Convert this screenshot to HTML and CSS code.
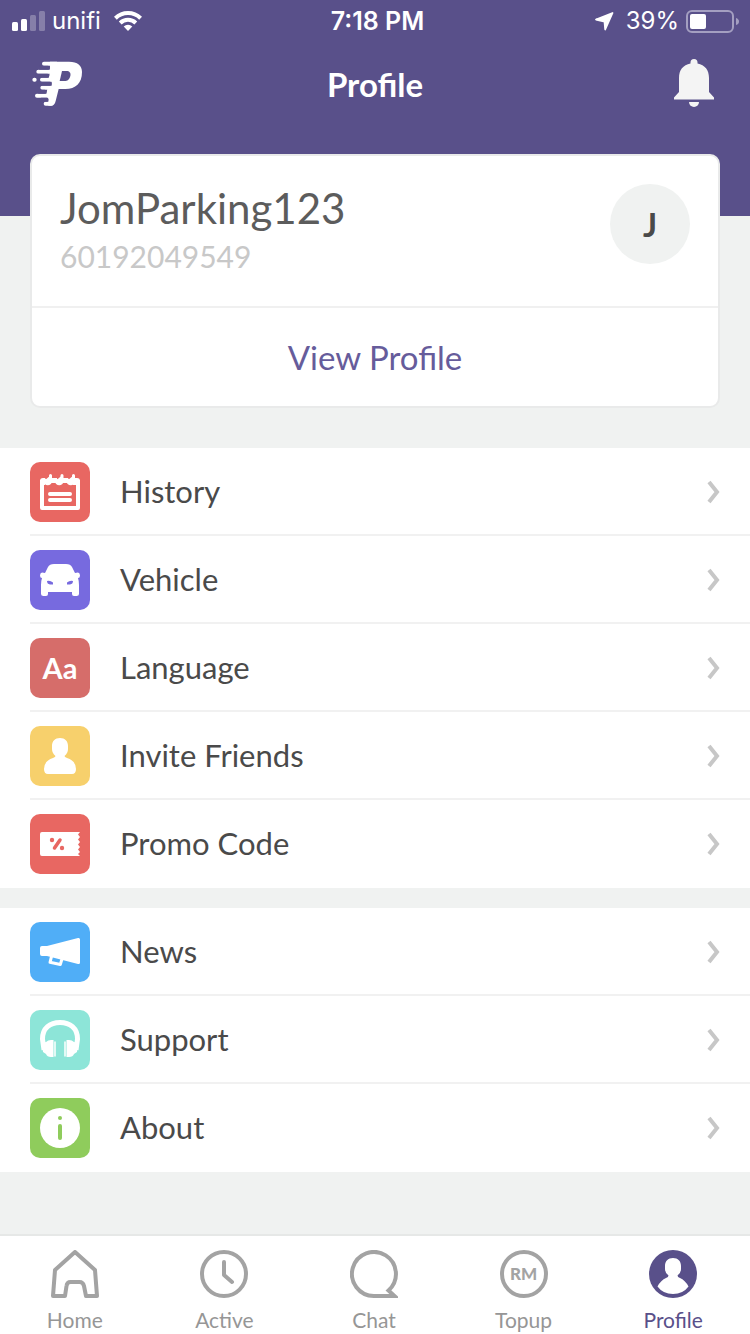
FILE: index.html
```html
<!DOCTYPE html>
<html lang="en">
<head>
<meta charset="utf-8">
<meta name="viewport" content="width=device-width, initial-scale=1">
<title>Profile</title>
<link rel="stylesheet" href="styles.css">
</head>
<body>
<header class="header">
  <div class="status">
    <div class="status-side">
      <svg width="33" height="20" viewBox="0 0 33 20" fill="#fff" aria-hidden="true"><rect y="11" width="6" height="9" rx="1.5"/><rect x="9" y="8" width="6" height="12" rx="1.5"/><g opacity=".27"><rect x="18" y="4" width="6" height="16" rx="1.5"/><rect x="27" width="6" height="20" rx="1.5"/></g></svg>
      <span class="carrier">unifi</span>
      <svg class="wifi" width="28" height="20" viewBox="0 0 28 20" aria-hidden="true"><g fill="none" stroke="#fff" stroke-width="4"><path d="M1.4 7.2a18 18 0 0 1 25.2 0"/><path d="M6.2 12a11.2 11.2 0 0 1 15.6 0"/></g><path d="M14 20l-4.3-4.4a6 6 0 0 1 8.6 0z" fill="#fff"/></svg>
    </div>
    <time class="clock">7:18 PM</time>
    <div class="status-side status-right">
      <svg class="locate" width="19" height="19" viewBox="0 0 19 19" aria-hidden="true"><path d="M17.500 1L1 7.500L9.500 9.500L10.200 17.500z" fill="#fff" stroke="#fff" stroke-width="1.800" stroke-linejoin="round"/></svg>
      <span>39%</span>
      <svg width="53" height="23" viewBox="0 0 53 23" aria-hidden="true"><rect x="1" y="1" width="46" height="21" rx="5" fill="none" stroke="#a49fc1" stroke-width="2"/><rect x="4" y="4" width="16" height="15" rx="2" fill="#fff"/><path d="M50 8q3 1 3 3.500T50 15z" fill="#a49fc1"/></svg>
    </div>
  </div>
  <div class="nav">
    <svg class="logo" width="54" height="48" viewBox="90 175 162 144" role="img" aria-label="JomParking"><path d="M150 183H207C233 183 246 195 246 214C246 248 227 265 196 265H176L167 301Q164 315 153 315H145V303L143 290L139 278L142 266L155 255V243L146 231L149 219V207L150 195Z" fill="#fff"/><path d="M186 211H199C209 211 213 217 211 226C208 237 203 241 193 241H179Z" fill="#59508a"/><g stroke="#fff" stroke-width="12" stroke-linecap="round"><path d="M132 189H170M115 213H160M126 237H160M103 237h1M127 261H160M111 285H160M137 309H155"/></g><g stroke="#59508a" stroke-width="12" stroke-linecap="round"><path d="M120 201H144M112 225H142M118 249H149M117 273H134M124 297H140"/></g></svg>
    <h1 class="title">Profile</h1>
    <button class="bell" type="button" aria-label="Notifications"><svg width="40" height="48" viewBox="0 0 40 48" fill="#f4f4f4"><path d="M0 40.500V38.500L5 33V19C5 11 9 6 16.500 4.500V3.500a3.500 3.500 0 0 1 7 0v1C31 6 35 11 35 19V33L40 38.500V40.500z"/><path d="M15 43h10a5 5 0 0 1-10 0z"/></svg></button>
  </div>
</header>
<main class="main">
  <section class="card">
    <div class="person">
      <div class="identity">
        <h2 class="name">JomParking123</h2>
        <p class="phone">60192049549</p>
      </div>
      <div class="avatar">J</div>
    </div>
    <a class="view" href="#profile">View Profile</a>
  </section>

  <nav class="list" aria-label="Account">
    <a class="row" href="#history">
      <svg class="tile red" viewBox="0 0 60 60"><path d="M12 18V46H48V18" fill="none" stroke="#fff" stroke-width="4" stroke-linejoin="round"/><path d="M10 23V19Q10 16 13 16H15V23zM20 16H27V21H20zM31 16H38V21H31zM43 16H47Q50 16 50 19V23H43z" fill="#fff"/><path d="M15 18V19.500a2.800 2.800 0 0 0 5.500 0V13.500M26.500 18V19.500a2.800 2.800 0 0 0 5.500 0V13.500M38 18V19.500a2.800 2.800 0 0 0 5.500 0V13.500" fill="#fff" stroke="#fff" stroke-width="3" stroke-linecap="round"/><path d="M20 32H40M20 38H40" stroke="#fff" stroke-width="4" stroke-linecap="round"/></svg>
      <span class="label">History</span>
      <svg class="chevron" viewBox="0 0 14 24"><path d="M3 2l8 10-8 10"/></svg>
    </a>
    <a class="row" href="#vehicle">
      <svg class="tile violet" viewBox="0 0 60 60"><path d="M15 23L18 17Q19.500 14 24 14H36Q40.500 14 42 17L45 23L48 22.500Q50 23 50 25.500Q50 28 48 28Q49 31 49 35V44Q49 46 46.500 46H44Q42 46 42 44V42H18V44Q18 46 16 46H13.500Q11 46 11 44V35Q11 31 12 28Q10 28 10 25.500Q10 23 12 22.500z" fill="#fff"/><path d="M17 31Q20 30 23 32.500V34.500H20Q17 34 17 31zM43 31Q40 30 37 32.500V34.500H40Q43 34 43 31z" fill="#776adf"/></svg>
      <span class="label">Vehicle</span>
      <svg class="chevron" viewBox="0 0 14 24"><path d="M3 2l8 10-8 10"/></svg>
    </a>
    <a class="row" href="#language">
      <span class="tile rose">Aa</span>
      <span class="label">Language</span>
      <svg class="chevron" viewBox="0 0 14 24"><path d="M3 2l8 10-8 10"/></svg>
    </a>
    <a class="row" href="#invite">
      <svg class="tile yellow" viewBox="0 0 60 60"><path d="M30 12C35 12 38 15 38 20V23Q38 27 34.500 30Q34.500 31 37 32Q46 35 46 43Q46 48 42 48H18Q14 48 14 43Q14 35 23 32Q25.500 31 25.500 30Q22 27 22 23V20C22 15 25 12 30 12z" fill="#fff"/></svg>
      <span class="label">Invite Friends</span>
      <svg class="chevron" viewBox="0 0 14 24"><path d="M3 2l8 10-8 10"/></svg>
    </a>
    <a class="row" href="#promo">
      <svg class="tile red" viewBox="0 0 60 60"><path d="M12 18H50L48 20.500L50 23L48 25.500L50 28L48 30.500L50 33L48 35.500L50 38L48 40L50 42H12Q10 42 10 40V20Q10 18 12 18z" fill="#fff"/><path d="M24.500 34L30 26" stroke="#e86762" stroke-width="3.500" stroke-linecap="round"/><circle cx="22" cy="26" r="2.200" fill="#e86762"/><circle cx="32" cy="34" r="2.200" fill="#e86762"/></svg>
      <span class="label">Promo Code</span>
      <svg class="chevron" viewBox="0 0 14 24"><path d="M3 2l8 10-8 10"/></svg>
    </a>
  </nav>

  <nav class="list" aria-label="Information">
    <a class="row" href="#news">
      <svg class="tile blue" viewBox="0 0 60 60"><path d="M12 24H17L48 16Q50 15.500 50 17.500V40.500Q50 42.500 48 42L17 34H12Q10 34 10 32V26Q10 24 12 24z" fill="#fff"/><path d="M21.500 34.500L20 40.300L30.300 42.500L32 37" fill="none" stroke="#fff" stroke-width="3" stroke-linejoin="round"/></svg>
      <span class="label">News</span>
      <svg class="chevron" viewBox="0 0 14 24"><path d="M3 2l8 10-8 10"/></svg>
    </a>
    <a class="row" href="#support">
      <svg class="tile mint" viewBox="0 0 60 60"><path d="M14 40L12.500 29C12.500 18 20 12.500 30 12.500S47.500 18 47.500 29L46 40" fill="none" stroke="#fff" stroke-width="5"/><path d="M12 33L16 32Q18 30 21 30H23.500V47H21Q17 47 16 44L13 42zM48 33L44 32Q42 30 39 30H36.500V47H39Q43 47 44 44L47 42z" fill="#fff"/><path d="M25 32V46M35 32V46" stroke="#fff" stroke-width="1.500" stroke-linecap="round"/></svg>
      <span class="label">Support</span>
      <svg class="chevron" viewBox="0 0 14 24"><path d="M3 2l8 10-8 10"/></svg>
    </a>
    <a class="row" href="#about">
      <svg class="tile green" viewBox="0 0 60 60"><circle cx="30" cy="30" r="20" fill="#fff"/><circle cx="30" cy="20" r="2" fill="#8fcc5c"/><path d="M30 28V40" stroke="#8fcc5c" stroke-width="4" stroke-linecap="round"/></svg>
      <span class="label">About</span>
      <svg class="chevron" viewBox="0 0 14 24"><path d="M3 2l8 10-8 10"/></svg>
    </a>
  </nav>
</main>

<nav class="tabs" aria-label="Main">
  <a class="tab" href="#home"><svg class="tab-icon" viewBox="0 0 48 48"><path d="M24 2L44 20L46 46H35L33 36Q32 32 28.500 32H19.500Q16 32 15.500 36L14 46H2L4 20z"/></svg>Home</a>
  <a class="tab" href="#active"><svg class="tab-icon" viewBox="0 0 48 48"><circle cx="24" cy="24" r="22"/><path d="M24 12V25L32 32" stroke-linecap="round"/></svg>Active</a>
  <a class="tab" href="#chat"><svg class="tab-icon sharp" viewBox="0 0 48 48"><path d="M24 46H44.500L38.500 40.500A22 22 0 1 0 24 46z"/></svg>Chat</a>
  <a class="tab" href="#topup"><span class="coin">RM</span>Topup</a>
  <a class="tab current" href="#profile" aria-current="page"><svg class="tab-icon solid" viewBox="0 0 48 48"><circle cx="24" cy="24" r="24" fill="#59508a"/><path d="M24 8C29 8 32 11 32 16V19Q32 23 28.500 25.500Q28.500 27 31 28Q36 30 39.500 36.500Q34 44 24 44T8.500 36.500Q12 30 17 28Q19.500 27 19.500 25.500Q16 23 16 19V16C16 11 19 8 24 8z" fill="#fff"/></svg>Profile</a>
</nav>
</body>
</html>
```
FILE: styles.css
```css
* {
  box-sizing: border-box;
}

body {
  margin: 0;
  min-height: 100vh;
  display: flex;
  flex-direction: column;
  background: #f0f2f1;
  color: #4a4a4a;
  font-family: Lato, "Noto Sans", sans-serif;
  font-size: 31px;
}

a {
  color: inherit;
  text-decoration: none;
}

h1,
h2,
p {
  margin: 0;
}

svg {
  display: block;
  flex: none;
}

.header {
  background: #59508a;
  color: #fff;
  padding-bottom: 88px;
}

.status,
.nav {
  display: grid;
  grid-template-columns: 1fr auto 1fr;
  align-items: center;
}

.status {
  height: 40px;
  padding: 1px 11px 0 12px;
  font: 400 24px/40px Inter, Roboto, sans-serif;
}

.status-side {
  display: flex;
  align-items: center;
  gap: 7px;
}

.status-right {
  justify-content: flex-end;
}

.wifi {
  margin-left: 6px;
}

.locate {
  margin-right: 5px;
}

.clock {
  padding-left: 4px;
  font-size: 25px;
  font-weight: 600;
}

.nav {
  height: 88px;
  padding: 0 36px;
}

.logo {
  margin: -2px 0 0 -6px;
}

.title {
  font-size: 33px;
  font-weight: 700;
  line-height: 40px;
}

.bell {
  justify-self: end;
  padding: 0 0 2px;
  border: 0;
  background: none;
}

.main {
  padding-bottom: 62px;
}

.card {
  margin: -62px 30px 40px;
  border: 2px solid #e9eaea;
  border-radius: 10px;
  background: #fff;
}

.person {
  display: flex;
  justify-content: space-between;
  padding: 28px 28px 32px;
}

.identity {
  display: flex;
  flex-direction: column;
  gap: 6px;
}

.name {
  color: #5c5c5c;
  font-size: 42px;
  font-weight: 400;
  line-height: 48px;
}

.phone {
  color: #c8c8c8;
  font-size: 30px;
  line-height: 36px;
}

.avatar {
  width: 80px;
  height: 80px;
  border-radius: 50%;
  background: #f0f2f1;
  font-weight: 700;
  font-size: 33px;
  line-height: 80px;
  text-align: center;
}

.view {
  display: block;
  border-top: 2px solid #f0f0f0;
  color: #665c9b;
  font-size: 33px;
  line-height: 98px;
  text-align: center;
}

.list {
  padding-left: 30px;
  background: #fff;
}

.list + .list {
  margin-top: 20px;
}

.row {
  display: flex;
  align-items: center;
  gap: 30px;
  height: 88px;
  padding: 2px 30px 0 0;
  border-bottom: 2px solid #f1f1f1;
}

.row:last-child {
  border-bottom-color: transparent;
}

.label {
  flex: 1;
  padding-bottom: 2px;
}

.tile {
  width: 60px;
  height: 60px;
  flex: none;
  border-radius: 10px;
}

.red {
  background: #e86762;
}

.violet {
  background: #776adf;
}

.rose {
  background: #d66d6a;
  color: #fff;
  font-size: 29px;
  font-weight: 700;
  line-height: 60px;
  text-align: center;
}

.yellow {
  background: #f7d06c;
}

.blue {
  background: #50aef7;
}

.mint {
  background: #8de5d8;
}

.green {
  background: #8fcc5c;
}

.chevron {
  width: 14px;
  height: 24px;
  fill: none;
  stroke: #c7c7c7;
  stroke-width: 4;
}

.tabs {
  display: flex;
  margin-top: auto;
  padding-right: 2px;
  border-top: 2px solid #e6e8e7;
  background: #fff;
}

.tab {
  flex: 1;
  display: flex;
  flex-direction: column;
  align-items: center;
  gap: 8px;
  padding-top: 14px;
  color: #969696;
  font-size: 21px;
  line-height: 28px;
}

.current {
  color: #59508a;
}

.tab-icon,
.coin {
  width: 48px;
  height: 48px;
}

.tab-icon {
  fill: none;
  stroke: #a3a3a3;
  stroke-width: 4;
  stroke-linejoin: round;
}

.sharp {
  stroke-linejoin: miter;
}

.solid {
  stroke: none;
}

.coin {
  border: 4px solid #a3a3a3;
  border-radius: 50%;
  color: #a3a3a3;
  font-size: 17px;
  font-weight: 900;
  line-height: 40px;
  text-align: center;
}
```
